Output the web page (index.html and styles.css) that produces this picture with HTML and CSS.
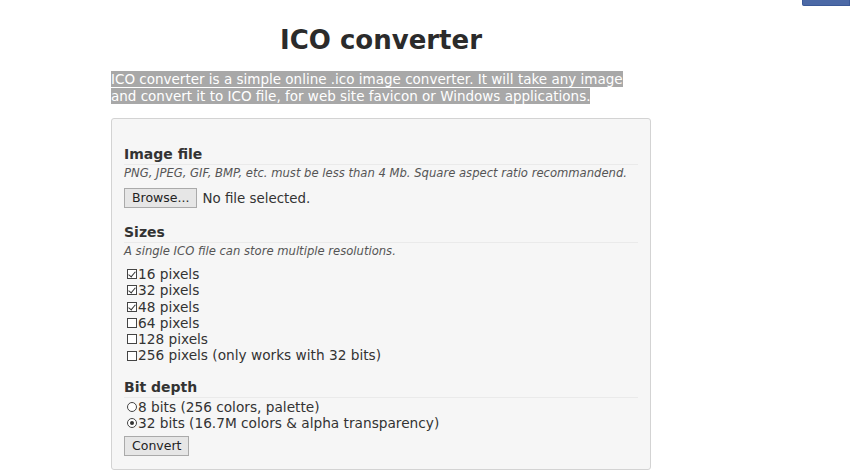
FILE: index.html
```html
<!DOCTYPE html>
<html lang="en">
<head>
  <meta charset="UTF-8">
  <title>ICO converter</title>
  <link rel="stylesheet" href="styles.css">
</head>
<body>
  <div class="fb-like"></div>
  <div class="page">
    <h1>ICO converter</h1>
    <p class="intro"><span class="selected">ICO converter is a simple online .ico image converter. It will take any image and convert it to ICO file, for web site favicon or Windows applications.</span></p>

    <form class="panel">
      <h2>Image file</h2>
      <p class="hint">PNG, JPEG, GIF, BMP, etc. must be less than 4 Mb. Square aspect ratio recommandend.</p>
      <div class="file-row">
        <span class="btn">Browse...</span>
        <span>No file selected.</span>
      </div>

      <h2>Sizes</h2>
      <p class="hint">A single ICO file can store multiple resolutions.</p>
      <div class="opts">
        <label class="opt"><input type="checkbox" class="box" checked>16 pixels</label>
        <label class="opt"><input type="checkbox" class="box" checked>32 pixels</label>
        <label class="opt"><input type="checkbox" class="box" checked>48 pixels</label>
        <label class="opt"><input type="checkbox" class="box">64 pixels</label>
        <label class="opt"><input type="checkbox" class="box">128 pixels</label>
        <label class="opt"><input type="checkbox" class="box">256 pixels (only works with 32 bits)</label>
      </div>

      <h2>Bit depth</h2>
      <div class="opts radios">
        <label class="opt"><input type="radio" name="bits" class="dot">8 bits (256 colors, palette)</label>
        <label class="opt"><input type="radio" name="bits" class="dot" checked>32 bits (16.7M colors &amp; alpha transparency)</label>
      </div>
      <span class="btn">Convert</span>
    </form>
  </div>
</body>
</html>
```

FILE: styles.css
```css
body {
  margin: 0;
  font-family: "DejaVu Sans", Verdana, sans-serif;
  font-size: 14px;
  color: #333;
  background: #fff;
}
.fb-like {
  position: absolute;
  top: 0;
  right: 0;
  width: 46px;
  height: 5px;
  background: #4c69a6;
  border: 1px solid #3b5998;
  border-top: none;
  border-radius: 0 0 0 2px;
}
.page {
  width: 540px;
  margin-left: 111px;
  padding-top: 22px;
}
h1 {
  margin: 0;
  text-align: center;
  font-size: 26px;
  font-weight: bold;
  color: #2b2b2b;
  line-height: 36px;
}
.intro {
  margin: 13px 0 13px;
  line-height: 17px;
  font-size: 13.5px;
}
.selected {
  background: #a8a8a8;
  color: #fff;
}
.panel {
  background: #f6f6f6;
  border: 1px solid #d3d3d3;
  border-radius: 3px;
  padding: 27px 12px 13px;
}
h2 {
  margin: 0;
  padding-bottom: 1px;
  font-size: 14px;
  font-weight: bold;
  color: #333;
  border-bottom: 1px solid #eaeaea;
  line-height: 17px;
}
.hint {
  margin: 0 0 6px;
  font-size: 11.6px;
  font-style: italic;
  color: #555;
  line-height: 17px;
  white-space: nowrap;
}
.file-row {
  display: flex;
  align-items: center;
  gap: 5px;
  margin-bottom: 16px;
  font-size: 13.4px;
}
.btn {
  display: inline-block;
  padding: 1px 7px;
  background: #e6e6e6;
  border: 1px solid #aaa;
  font-size: 12.5px;
  line-height: 16px;
  color: #222;
}
.opts {
  margin-bottom: 15px;
}
.radios {
  margin: 1px 0 5px;
}
.opt {
  display: flex;
  align-items: center;
  line-height: 16.3px;
  margin-left: 3px;
  font-size: 13.7px;
}
.box, .dot {
  appearance: none;
  -webkit-appearance: none;
  margin: 0 1px 0 0;
  width: 10px;
  height: 10px;
  border: 1px solid #444;
  background: #fff;
  position: relative;
}
.box:checked::after {
  content: "";
  position: absolute;
  left: 2px;
  top: 0;
  width: 3px;
  height: 6px;
  border: solid #333;
  border-width: 0 1px 1px 0;
  transform: rotate(40deg);
}
.dot {
  border-radius: 50%;
}
.dot:checked::after {
  content: "";
  position: absolute;
  left: 2px;
  top: 2px;
  width: 4px;
  height: 4px;
  border-radius: 50%;
  background: #333;
}
```
